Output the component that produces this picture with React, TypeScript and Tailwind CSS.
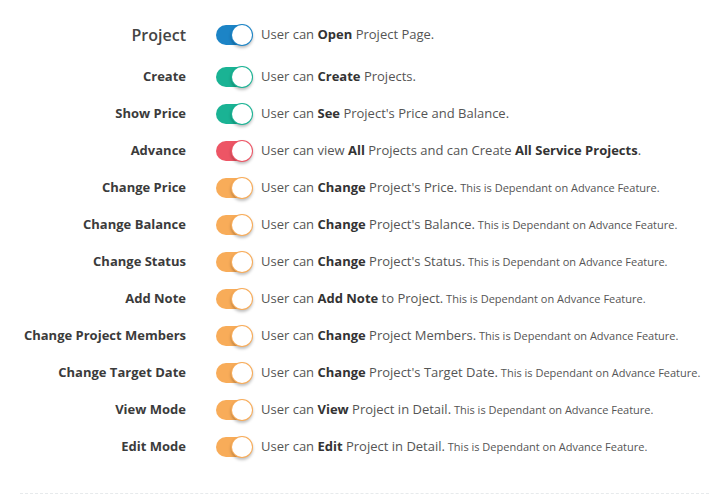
import * as React from 'react'

type Row = {
  label: string
  color: string
  parts: [string, string, string]
  note?: boolean
}

const ROWS: Row[] = [
  { label: 'Create', color: 'bg-[#1ab394]', parts: ['User can ', 'Create', ' Projects.'] },
  { label: 'Show Price', color: 'bg-[#1ab394]', parts: ['User can ', 'See', " Project's Price and Balance."] },
  { label: 'Change Price', color: 'bg-[#f8ac59]', parts: ['User can ', 'Change', " Project's Price."], note: true },
  { label: 'Change Balance', color: 'bg-[#f8ac59]', parts: ['User can ', 'Change', " Project's Balance."], note: true },
  { label: 'Change Status', color: 'bg-[#f8ac59]', parts: ['User can ', 'Change', " Project's Status."], note: true },
  { label: 'Add Note', color: 'bg-[#f8ac59]', parts: ['User can ', 'Add Note', ' to Project.'], note: true },
  { label: 'Change Project Members', color: 'bg-[#f8ac59]', parts: ['User can ', 'Change', ' Project Members.'], note: true },
  { label: 'Change Target Date', color: 'bg-[#f8ac59]', parts: ['User can ', 'Change', " Project's Target Date."], note: true },
  { label: 'View Mode', color: 'bg-[#f8ac59]', parts: ['User can ', 'View', ' Project in Detail.'], note: true },
  { label: 'Edit Mode', color: 'bg-[#f8ac59]', parts: ['User can ', 'Edit', ' Project in Detail.'], note: true },
]

function Toggle({ color }: { color: string }) {
  return (
    <span className={`relative flex h-[20px] w-[36px] shrink-0 items-center rounded-full ${color}`}>
      <span
        className={`absolute -right-[1px] top-1/2 h-[22px] w-[22px] -translate-y-1/2 rounded-full ${color} p-[1px] shadow-[0_2px_3px_rgba(0,0,0,0.25)]`}
      >
        <span className="block h-full w-full rounded-full bg-white" />
      </span>
    </span>
  )
}

function PermRow({ row }: { row: Row }) {
  return (
    <div className="flex h-[37px] items-center">
      <div className="w-[186px] shrink-0 text-right text-[13px] font-bold text-[#3b3b3b]">{row.label}</div>
      <div className="ml-[30px]">
        <Toggle color={row.color} />
      </div>
      <div className="ml-[9px] whitespace-nowrap text-[13px] text-[#555]">
        {row.parts[0]}
        <b className="font-bold text-[#333]">{row.parts[1]}</b>
        {row.parts[2]}
        {row.note && <span className="text-[11px]"> This is Dependant on Advance Feature.</span>}
      </div>
    </div>
  )
}

export default function App() {
  return (
    <div
      className="h-[496px] w-[709px] overflow-hidden bg-white"
      style={{ fontFamily: '"Open Sans", sans-serif' }}
    >
      <div className="pt-[14px]">
        <div className="flex h-[44px] items-center pb-[3px]">
          <div className="w-[186px] shrink-0 text-right text-[16px] font-semibold text-[#454545]">Project</div>
          <div className="ml-[30px]">
            <Toggle color="bg-[#1c84c6]" />
          </div>
          <div className="ml-[9px] whitespace-nowrap text-[13px] text-[#555]">
            User can <b className="font-bold text-[#333]">Open</b> Project Page.
          </div>
        </div>
        {ROWS.slice(0, 2).map((r) => (
          <PermRow key={r.label} row={r} />
        ))}
        <div className="flex h-[37px] items-center">
          <div className="w-[186px] shrink-0 text-right text-[13px] font-bold text-[#3b3b3b]">Advance</div>
          <div className="ml-[30px]">
            <Toggle color="bg-[#ed5565]" />
          </div>
          <div className="ml-[9px] whitespace-nowrap text-[13px] text-[#555]">
            User can view <b className="font-bold text-[#333]">All</b> Projects and can Create{' '}
            <b className="font-bold text-[#333]">All Service Projects</b>.
          </div>
        </div>
        {ROWS.slice(2).map((r) => (
          <PermRow key={r.label} row={r} />
        ))}
        <div className="ml-[20px] mt-[28px] border-t border-dashed border-[#e7eaec]" />
      </div>
    </div>
  )
}
